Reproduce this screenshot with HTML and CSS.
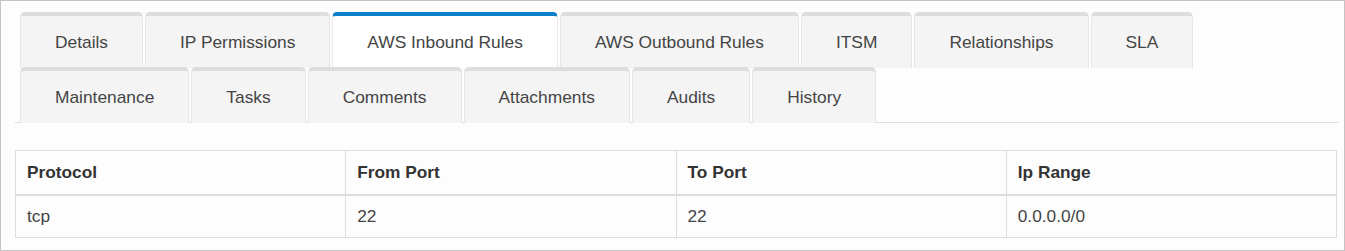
FILE: index.html
```html
<!DOCTYPE html>
<html lang="en">
<head>
  <meta charset="UTF-8">
  <title>Security Group</title>
  <link rel="stylesheet" href="styles.css">
</head>
<body>
  <div class="panel">
    <ul class="tabs">
      <li class="tab">Details</li>
      <li class="tab">IP Permissions</li>
      <li class="tab active">AWS Inbound Rules</li>
      <li class="tab">AWS Outbound Rules</li>
      <li class="tab">ITSM</li>
      <li class="tab">Relationships</li>
      <li class="tab">SLA</li>
      <li class="tab">Maintenance</li>
      <li class="tab">Tasks</li>
      <li class="tab">Comments</li>
      <li class="tab">Attachments</li>
      <li class="tab">Audits</li>
      <li class="tab">History</li>
    </ul>

    <table class="rules">
      <thead>
        <tr>
          <th>Protocol</th>
          <th>From Port</th>
          <th>To Port</th>
          <th>Ip Range</th>
        </tr>
      </thead>
      <tbody>
        <tr>
          <td>tcp</td>
          <td>22</td>
          <td>22</td>
          <td>0.0.0.0/0</td>
        </tr>
      </tbody>
    </table>
  </div>
</body>
</html>
```

FILE: styles.css
```css
body {
  margin: 0;
  font-family: "Liberation Sans", Arial, sans-serif;
  color: #444;
  background: #fff;
}

.panel {
  height: 251px;
  box-sizing: border-box;
  border: 1px solid #c4c4c4;
  background: #fdfdfd;
  padding: 11px 6px 0 14px;
}

.tabs {
  list-style: none;
  margin: 0;
  padding: 0 0 0 5px;
  display: flex;
  flex-wrap: wrap;
  width: 1319px;
  border-bottom: 1px solid #dedede;
}

.tab {
  height: 56px;
  box-sizing: border-box;
  margin: 0 2px -1px 0;
  padding: 0 34px;
  display: flex;
  align-items: center;
  font-size: 17.35px;
  color: #444;
  background: #f4f4f4;
  border: 1px solid #e6e6e6;
  border-top: 4px solid #dddddd;
  border-bottom: none;
  border-radius: 5px 5px 0 0;
  cursor: pointer;
}

.tab.active {
  background: #fff;
  border-top-color: #0b80c8;
  border-left-color: #e8e8e8;
  border-right-color: #e8e8e8;
}

.rules {
  margin-top: 27px;
  width: 1322px;
  border-collapse: collapse;
  table-layout: fixed;
  font-size: 17.3px;
}

.rules th,
.rules td {
  border: 1px solid #dddddd;
  padding: 12px 11px;
  line-height: 19px;
  text-align: left;
}

.rules th {
  font-weight: bold;
  color: #333;
  border-bottom-width: 2px;
}

.rules td {
  padding: 11px 11px;
}
```
